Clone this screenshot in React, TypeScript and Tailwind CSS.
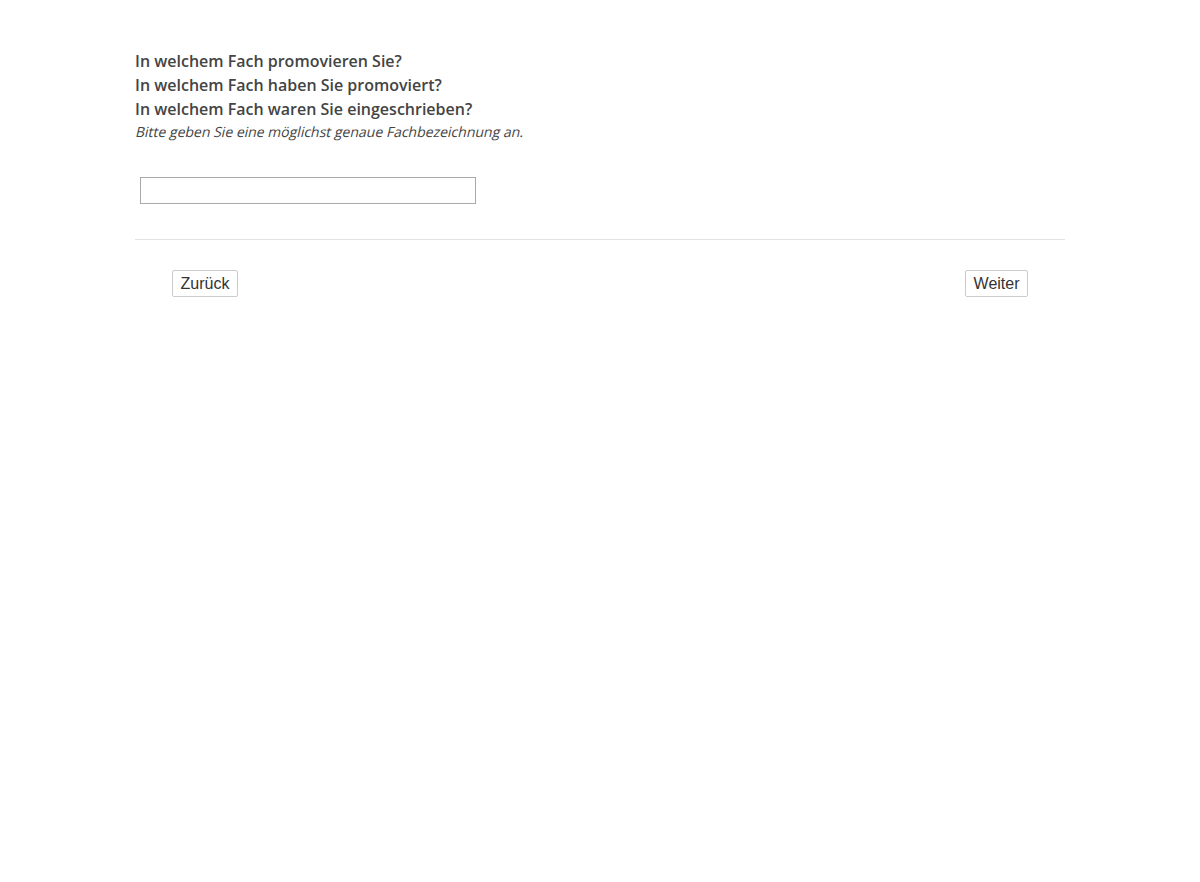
import React from "react";

export default function App() {
  return (
    <div className="min-h-[882px] bg-white">
      <div className="ml-[135px] w-[930px] pt-[49px]">
        <div className="font-['Open_Sans',sans-serif] text-[#444]">
          <div className="text-[16px] leading-[24px] font-semibold">In welchem Fach promovieren Sie?</div>
          <div className="text-[16px] leading-[24px] font-semibold">In welchem Fach haben Sie promoviert?</div>
          <div className="text-[16px] leading-[24px] font-semibold">In welchem Fach waren Sie eingeschrieben?</div>
          <div className="mt-[1px] text-[14px] leading-[20px]">
            <span className="inline-block origin-[0_75%] -skew-x-[13deg]">
              Bitte geben Sie eine möglichst genaue Fachbezeichnung an.
            </span>
          </div>
        </div>
        <div className="pl-[5px] pt-[35px]">
          <input
            type="text"
            className="block w-[336px] h-[27px] border border-[#a9a9a9] bg-white px-1 outline-none"
          />
        </div>
        <div className="mt-[35px] border-t border-[#e3e3e3]" />
        <div className="flex justify-between px-[37px] pt-[30px]">
          <button className="h-[27px] px-[7.5px] border border-[#cccccc] rounded-[2px] bg-white text-[16px] text-[#333] font-['Liberation_Sans',Arial,sans-serif] leading-none">
            Zurück
          </button>
          <button className="h-[27px] px-[7.5px] border border-[#cccccc] rounded-[2px] bg-white text-[16px] text-[#333] font-['Liberation_Sans',Arial,sans-serif] leading-none">
            Weiter
          </button>
        </div>
      </div>
    </div>
  );
}
